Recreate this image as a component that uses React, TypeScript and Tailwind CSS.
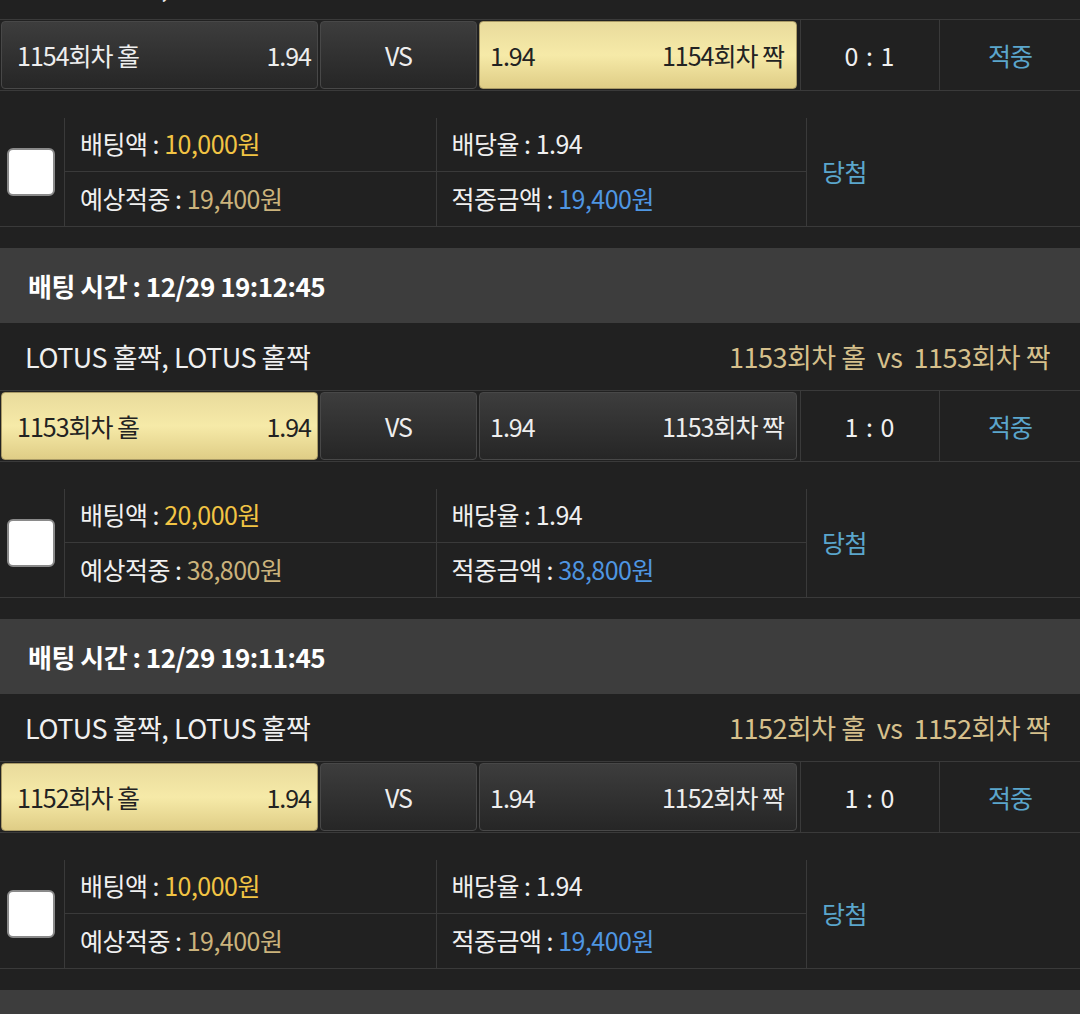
import React from 'react'

type Bet = {
  time: string
  round: number
  pick: 'odd' | 'even'
  score: string
  amount: string
  expected: string
  won: string
}

const bets: Bet[] = [
  { time: '12/29 19:13:45', round: 1154, pick: 'even', score: '0 : 1', amount: '10,000원', expected: '19,400원', won: '19,400원' },
  { time: '12/29 19:12:45', round: 1153, pick: 'odd', score: '1 : 0', amount: '20,000원', expected: '38,800원', won: '38,800원' },
  { time: '12/29 19:11:45', round: 1152, pick: 'odd', score: '1 : 0', amount: '10,000원', expected: '19,400원', won: '19,400원' },
  { time: '12/29 19:10:45', round: 1151, pick: 'even', score: '0 : 1', amount: '10,000원', expected: '19,400원', won: '19,400원' },
]

const goldBtn =
  'bg-gradient-to-b from-[#e9db9c] via-[#f6eaa8] to-[#dfcd86] border border-[#a99a66] text-[#222]'
const darkBtn =
  'bg-gradient-to-b from-[#3d3d3d] to-[#262626] border border-[#484848] text-[#eee]'

function BetBlock({ bet }: { bet: Bet }) {
  const odd = bet.pick === 'odd'
  return (
    <div>
      {/* header */}
      <div className="h-[75px] bg-[#3d3d3d] flex items-center pl-[28px] text-[26px] font-bold text-white tracking-[-0.5px]">
        배팅 시간 : {bet.time}
      </div>

      {/* title */}
      <div className="h-[67px] flex items-center justify-between pl-[25px] pr-[30px] text-[27px] tracking-[-0.5px]">
        <span className="text-[#f0f0f0]">LOTUS 홀짝, LOTUS 홀짝</span>
        <span className="text-[#d6c08c]">
          {bet.round}회차 홀 &nbsp;vs&nbsp; {bet.round}회차 짝
        </span>
      </div>

      {/* pick row */}
      <div className="h-[72px] flex border-y border-[#3a3a3a] text-[25px] tracking-[-1px]">
        <div className="w-[800px] flex gap-[2px] px-[1px] pt-[1px] pb-[1px]">
          <div className={`w-[317px] rounded-[4px] flex items-center justify-between pl-[15px] pr-[6px] ${odd ? goldBtn : darkBtn}`}>
            <span>{bet.round}회차 홀</span>
            <span>1.94</span>
          </div>
          <div className={`w-[157px] rounded-[4px] flex items-center justify-center ${darkBtn}`}>
            VS
          </div>
          <div className={`w-[318px] rounded-[4px] flex items-center justify-between pl-[10px] pr-[12px] ${odd ? darkBtn : goldBtn}`}>
            <span>1.94</span>
            <span>{bet.round}회차 짝</span>
          </div>
        </div>
        <div className="w-[140px] border-x border-[#3a3a3a] flex items-center justify-center text-[#f0f0f0] tracking-[1px]">
          {bet.score}
        </div>
        <div className="flex-1 flex items-center justify-center text-[#5ba6cc]">적중</div>
      </div>

      <div className="h-[27px]" />

      {/* detail */}
      <div className="h-[109px] flex border-b border-[#3a3a3a] text-[25px] tracking-[-0.5px] text-[#f0f0f0]">
        <div className="w-[64px] flex items-center pl-[7px]">
          <div className="w-[48px] h-[48px] rounded-[6px] bg-white border-[2px] border-[#8a8a8a]" />
        </div>
        <div className="w-[742px] grid grid-cols-2 grid-rows-2 border-l border-[#3a3a3a]">
          <div className="flex items-center pl-[15px] pb-[2px] border-b border-[#3a3a3a]">
            <span>
              배팅액 : <span className="text-[#f2c444]">{bet.amount}</span>
            </span>
          </div>
          <div className="flex items-center pl-[15px] pb-[2px] border-b border-l border-[#3a3a3a]">
            <span>배당율 : 1.94</span>
          </div>
          <div className="flex items-center pl-[15px] pb-[2px]">
            <span>
              예상적중 : <span className="text-[#cbb37c]">{bet.expected}</span>
            </span>
          </div>
          <div className="flex items-center pl-[15px] pb-[2px] border-l border-[#3a3a3a]">
            <span>
              적중금액 : <span className="text-[#4f96e2]">{bet.won}</span>
            </span>
          </div>
        </div>
        <div className="flex-1 flex items-center pl-[15px] pb-[2px] border-l border-[#3a3a3a] text-[#5ba6cc]">당첨</div>
      </div>

      <div className="h-[21px]" />
    </div>
  )
}

export default function App() {
  return (
    <div
      className="min-h-screen bg-[#212121] overflow-hidden leading-none"
      style={{ fontFamily: '"Noto Sans CJK KR", "Noto Sans", sans-serif' }}
    >
      <div className="-mt-[123px]">
        {bets.map(b => (
          <BetBlock key={b.round} bet={b} />
        ))}
      </div>
    </div>
  )
}
